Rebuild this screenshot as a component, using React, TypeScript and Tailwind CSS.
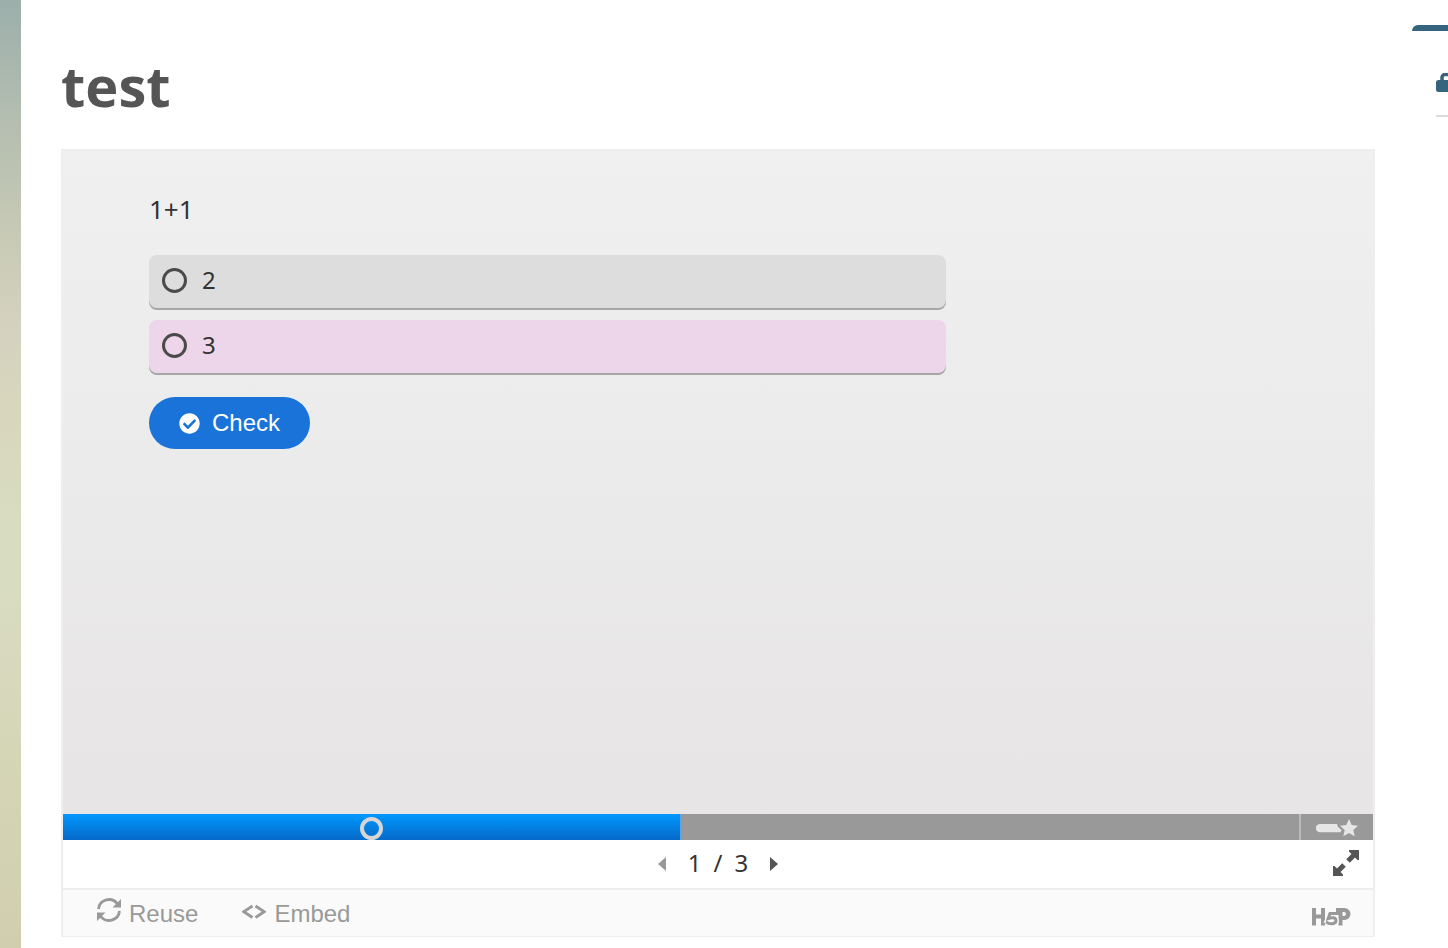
import React from "react";
import { FaCheckCircle } from "react-icons/fa";

const answers = [
  { id: "a", label: "2", style: "bg-[#dddddd]" },
  { id: "b", label: "3", style: "bg-[#edd6e9]" },
];

function Answer({ id, label, style }: { id: string; label: string; style: string }) {
  return (
    <label
      htmlFor={id}
      className={`flex h-[53px] cursor-pointer items-center gap-[15px] rounded-lg px-[13px] pb-[3px] text-2xl shadow-[0_2px_0_#a6a6a6] ${style}`}
    >
      <input
        id={id}
        type="radio"
        name="answer"
        className="size-[25px] shrink-0 appearance-none rounded-full border-3 border-[#4a4a4a] checked:bg-[#4a4a4a]"
      />
      {label}
    </label>
  );
}

function ReuseIcon() {
  return (
    <svg viewBox="0 0 24 24" className="size-6" fill="none" aria-hidden="true">
      <path d="M1.500 11A10.500 10.500 0 0 1 20.500 6M22.500 13A10.500 10.500 0 0 1 3.500 18" stroke="#999" strokeWidth="2.800" />
      <path d="M24 1V9.500H15.500ZM0 23V14.500H8.500Z" fill="#999" />
    </svg>
  );
}

function EmbedIcon() {
  return (
    <svg viewBox="0 0 24 16" className="h-4 w-6" fill="none" stroke="#999" strokeWidth="2.800" aria-hidden="true">
      <path d="M10.500 2L1.800 7.700L10.500 13.500M13.500 2L22.200 7.700L13.500 13.500" />
    </svg>
  );
}

function SummaryIcon() {
  return (
    <svg viewBox="0 0 42 18" className="h-[18px] w-[42px]" fill="#e6e6e6" aria-hidden="true">
      <path d="M4 5H21L22 8L25.500 11L24.500 13.300H4A4.100 4.100 0 0 1 4 5Z" />
      <path d="M33 0L35.700 6L42 6.700L37.300 11L38.700 17.300L33 14L27.300 17.300L28.700 11L24 6.700L30.300 6Z" />
    </svg>
  );
}

function FullscreenIcon() {
  return (
    <svg viewBox="0 0 26 26" className="size-[26px]" fill="#555" aria-hidden="true">
      <path d="M16 0H26V10H24.500L16 1.500ZM0 16H1.500L10 24.500V26H0Z" />
      <path d="M22 4L15 11M11 15L4 22" stroke="#555" strokeWidth="5" />
    </svg>
  );
}

function H5PLogo() {
  return (
    <svg viewBox="0 0 39 18" className="h-[18px] w-[39px]" role="img" aria-label="H5P">
      <path d="M0 0H4V6.500H9V0H13V17.500H9V10.500H4V17.500H0Z" fill="#999" />
      <path fillRule="evenodd" d="M24 0H32.500A6 6 0 0 1 32.500 12H30.500V17.500H26.500V4H24ZM30.500 4V8H32A2 2 0 0 0 32 4Z" fill="#999" />
      <path d="M18 5.500L16.200 10.500C20 9 24 9.500 24 12.500C24 16 18.500 17 14.500 14" fill="none" stroke="#fafafa" strokeWidth="5.500" />
      <path d="M27 5.500H18L16.200 10.500C20 9 24 9.500 24 12.500C24 16 18.500 17 14 14" fill="none" stroke="#999" strokeWidth="3" />
    </svg>
  );
}

export default function App() {
  return (
    <div className="flex min-h-screen overflow-hidden bg-white font-['Noto_Sans','Open_Sans',sans-serif] text-[#333]">
      <div className="w-[21px] shrink-0 bg-[linear-gradient(to_bottom,#9cafab_0%,#b3bdb0_12%,#c6c9b5_24%,#d4d1bf_34%,#d8d6bd_42%,#d8dcc0_55%,#d8dcc0_62%,#d8d8be_70%,#d5d6b6_80%,#d0ceae_100%)]" />

      <main className="min-w-0 flex-1 pt-[45px] pr-[37px] pb-3 pl-10">
        <h1 className="font-['Open_Sans','Noto_Sans',sans-serif] text-[56px] leading-[80px] font-bold text-[#555]">test</h1>

        <section className="mt-6 border-2 border-b border-[#eee] bg-white">
          <form className="min-h-[663px] bg-[linear-gradient(to_bottom,#f0f0f0,#e7e5e6)] px-[86px] pt-10" onSubmit={(e) => e.preventDefault()}>
            <fieldset>
              <legend className="text-[26px] leading-9">1+1</legend>
              <div className="mt-7 flex w-[70%] flex-col gap-3">
                {answers.map((a) => (
                  <Answer key={a.id} {...a} />
                ))}
              </div>
            </fieldset>
            <button type="submit" className="mt-6 flex h-[52px] items-center gap-3 rounded-full bg-[#1a73d9] px-[30px] font-['Liberation_Sans',sans-serif] text-2xl text-white">
              <FaCheckCircle className="size-[21px]" />
              Check
            </button>
          </form>

          <div className="flex h-[26px] bg-[#999]">
            <button aria-label="Slide 1" className="flex flex-1 items-center justify-center border-r-2 border-[#5fa3e0] bg-[linear-gradient(to_bottom,#0098ff,#0669c8)] bg-clip-padding pt-[3px]">
              <span className="size-[23px] rounded-full border-4 border-[#d6d6d6]" />
            </button>
            <button aria-label="Slide 2" className="flex-1 border-r-2 border-[#bbb]" />
            <button aria-label="Summary" className="flex w-[72px] items-center justify-center pt-0.5">
              <SummaryIcon />
            </button>
          </div>

          <nav className="grid h-12 grid-cols-3 items-center px-[14px] pb-0.5 text-2xl">
            <span />
            <div className="flex items-center justify-center gap-[22px]">
              <button aria-label="Previous slide" className="pt-0.5">
                <svg viewBox="0 0 8 14" className="h-[14px] w-2" fill="#999" aria-hidden="true"><path d="M8 0V14L0 7Z" /></svg>
              </button>
              <span className="flex gap-3"><span>1</span><span>/</span><span>3</span></span>
              <button aria-label="Next slide" className="pt-0.5">
                <svg viewBox="0 0 8 14" className="h-[14px] w-2" fill="#555" aria-hidden="true"><path d="M0 0V14L8 7Z" /></svg>
              </button>
            </div>
            <button aria-label="Fullscreen" className="justify-self-end">
              <FullscreenIcon />
            </button>
          </nav>

          <footer className="flex h-12 items-center border-t-2 border-[#eee] bg-[#fafafa] px-[22px] pt-0.5 font-['Liberation_Sans',sans-serif] text-2xl text-[#999]">
            <button className="ml-3 flex items-center gap-2">
              <span className="pb-2"><ReuseIcon /></span>
              Reuse
            </button>
            <button className="ml-11 flex items-center gap-2">
              <span className="pb-1"><EmbedIcon /></span>
              Embed
            </button>
            <a href="#h5p" className="ml-auto pt-1.5">
              <H5PLogo />
            </a>
          </footer>
        </section>
      </main>

      <aside className="w-9 shrink-0 overflow-hidden pt-[25px]">
        <div className="h-1.5 rounded-tl-md bg-[#35647e]" />
        <div className="ml-6 flex h-[86px] items-center overflow-hidden border-b-2 border-[#ddd] pt-[18px]">
          <svg viewBox="0 0 20 19" className="h-[19px] w-5 shrink-0" aria-hidden="true">
            <path d="M6 9V4.500A3 3 0 0 1 9 1.500H14" fill="none" stroke="#35647e" strokeWidth="3.500" />
            <rect y="7" width="20" height="12" rx="2.500" fill="#35647e" />
          </svg>
        </div>
      </aside>
    </div>
  );
}
